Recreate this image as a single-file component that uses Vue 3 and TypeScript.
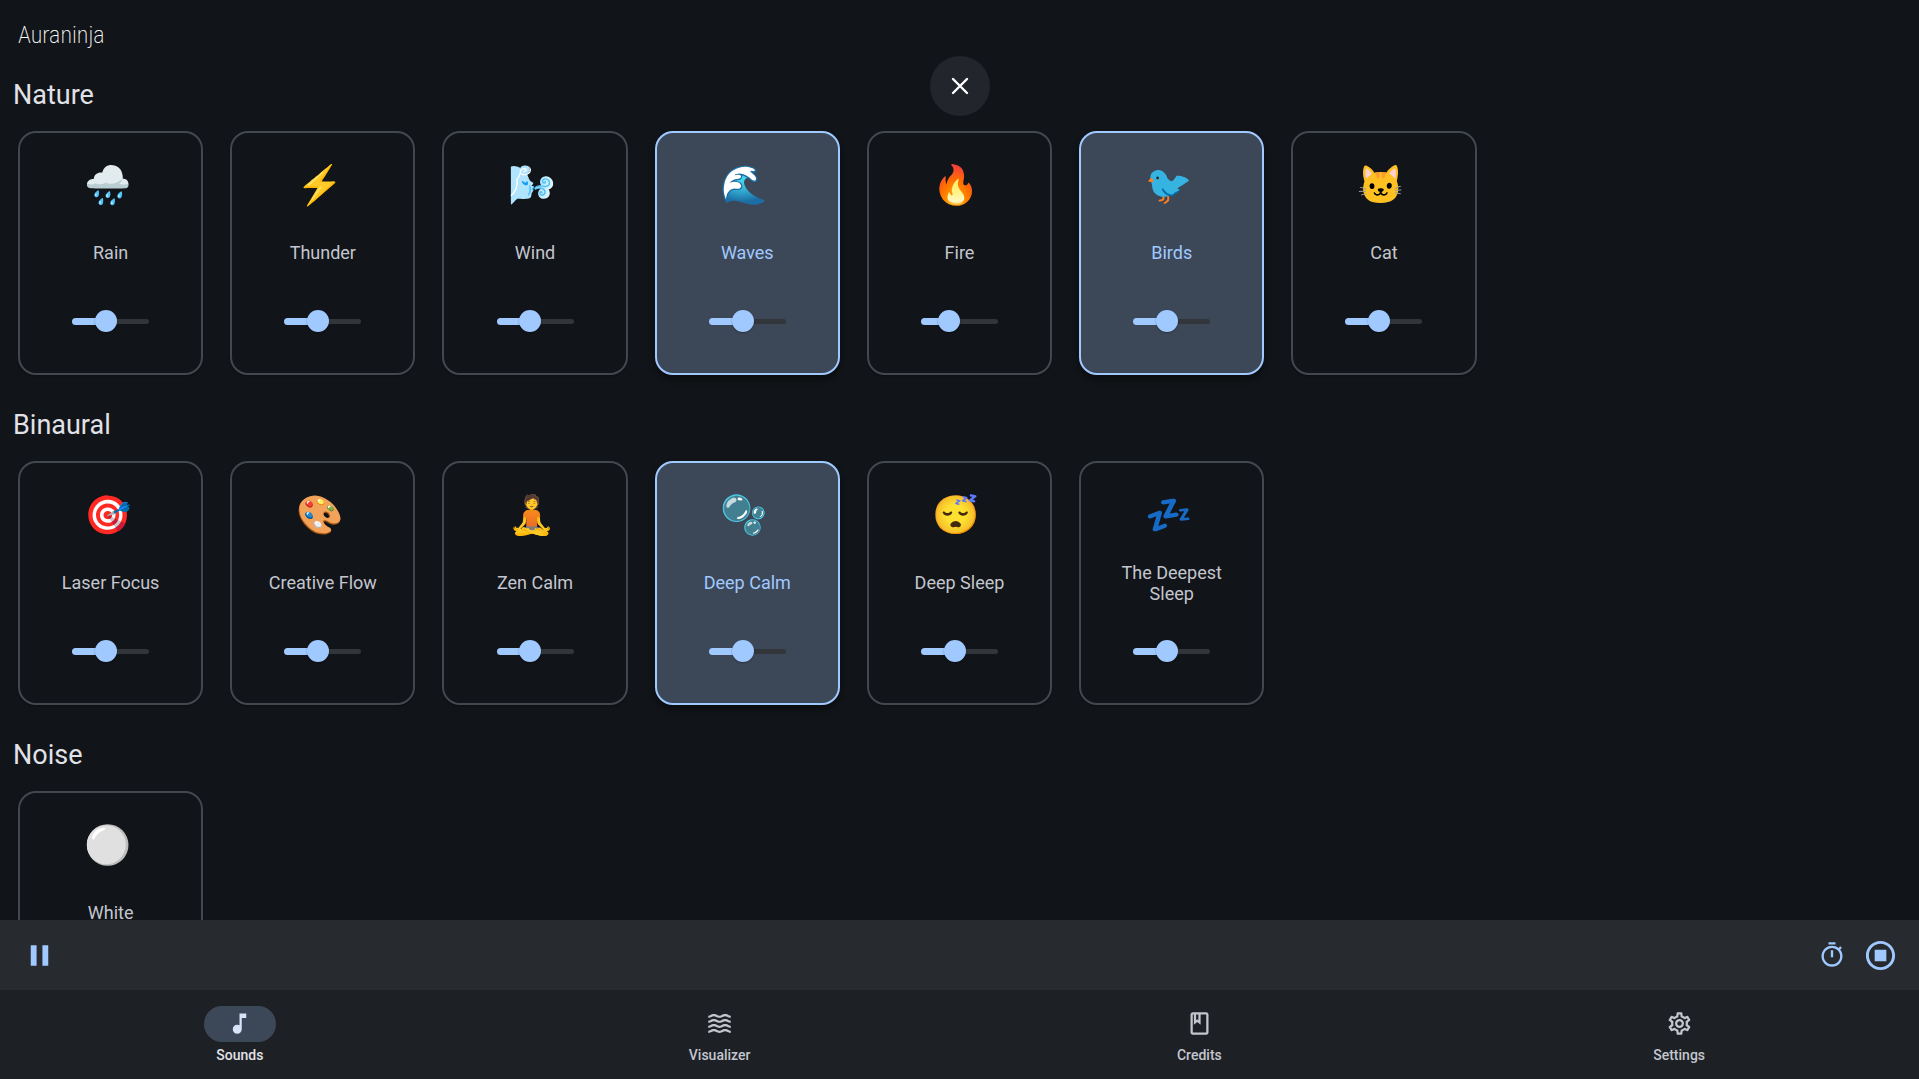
<script setup lang="ts">
import { reactive, ref } from 'vue'

interface Sound {
  name: string
  emoji: string
  volume: number
  active: boolean
}
interface Category {
  title: string
  sounds: Sound[]
}

const sound = (name: string, emoji: string, volume = 44, active = false): Sound => ({ name, emoji, volume, active })

const categories = reactive<Category[]>([
  {
    title: 'Nature',
    sounds: [
      sound('Rain', '🌧️'),
      sound('Thunder', '⚡'),
      sound('Wind', '🌬️'),
      sound('Waves', '🌊', 44, true),
      sound('Fire', '🔥', 36),
      sound('Birds', '🐦', 44, true),
      sound('Cat', '🐱'),
    ],
  },
  {
    title: 'Binaural',
    sounds: [
      sound('Laser Focus', '🎯'),
      sound('Creative Flow', '🎨'),
      sound('Zen Calm', '🧘'),
      sound('Deep Calm', '🫧', 44, true),
      sound('Deep Sleep', '😴'),
      sound('The Deepest Sleep', '💤'),
    ],
  },
  { title: 'Noise', sounds: [sound('White', '⚪')] },
])

const wave = (y: number) =>
  `M17 ${y}c-1.35 0-2.2.42-2.95.8-.65.33-1.18.6-2.05.6-.9 0-1.4-.25-2.05-.6-.75-.38-1.57-.8-2.95-.8s-2.2.42-2.95.8c-.65.33-1.17.6-2.05.6v1.95c1.35 0 2.2-.42 2.95-.8.65-.33 1.17-.6 2.05-.6s1.4.25 2.05.6c.75.38 1.57.8 2.95.8s2.2-.42 2.95-.8c.65-.33 1.18-.6 2.05-.6.9 0 1.4.25 2.05.6.75.38 1.58.8 2.95.8v-1.95c-.9 0-1.4-.25-2.05-.6-.75-.38-1.6-.8-2.95-.8z`

const tabs = [
  {
    name: 'Sounds',
    path: 'M12 3v10.55c-.59-.34-1.27-.55-2-.55-2.21 0-4 1.79-4 4s1.79 4 4 4 4-1.79 4-4V7h4V3h-6z',
  },
  { name: 'Visualizer', path: [16.99, 12.54, 8.09, 3.64].map(wave).join('') },
  {
    name: 'Credits',
    path: 'M18 2H6c-1.1 0-2 .9-2 2v16c0 1.1.9 2 2 2h12c1.1 0 2-.9 2-2V4c0-1.1-.9-2-2-2zM9 4h2v5l-1-.75L9 9V4zm9 16H6V4h1v9l3-2.25L13 13V4h5v16z',
  },
  {
    name: 'Settings',
    path: 'M19.43 12.98c.04-.32.07-.64.07-.98 0-.34-.03-.66-.07-.98l2.11-1.65c.19-.15.24-.42.12-.64l-2-3.46c-.09-.16-.26-.25-.44-.25-.06 0-.12.01-.17.03l-2.49 1c-.52-.4-1.08-.73-1.69-.98l-.38-2.65C14.46 2.18 14.25 2 14 2h-4c-.25 0-.46.18-.49.42l-.38 2.65c-.61.25-1.17.59-1.69.98l-2.49-1c-.06-.02-.12-.03-.18-.03-.17 0-.34.09-.43.25l-2 3.46c-.13.22-.07.49.12.64l2.11 1.65c-.04.32-.07.65-.07.98 0 .33.03.66.07.98l-2.11 1.65c-.19.15-.24.42-.12.64l2 3.46c.09.16.26.25.44.25.06 0 .12-.01.17-.03l2.49-1c.52.4 1.08.73 1.69.98l.38 2.65c.03.24.24.42.49.42h4c.25 0 .46-.18.49-.42l.38-2.65c.61-.25 1.17-.59 1.69-.98l2.49 1c.06.02.12.03.18.03.17 0 .34-.09.43-.25l2-3.46c.12-.22.07-.49-.12-.64l-2.11-1.65zm-1.98-1.71c.04.31.05.52.05.73 0 .21-.02.43-.05.73l-.14 1.13.89.7 1.08.84-.7 1.21-1.27-.51-1.04-.42-.9.68c-.43.32-.84.56-1.25.73l-1.06.43-.16 1.13-.2 1.35h-1.4l-.19-1.35-.16-1.13-1.06-.43c-.43-.18-.83-.41-1.23-.71l-.91-.7-1.06.43-1.27.51-.7-1.21 1.08-.84.89-.7-.14-1.13c-.03-.31-.05-.54-.05-.74s.02-.43.05-.73l.14-1.13-.89-.7-1.08-.84.7-1.21 1.27.51 1.04.42.9-.68c.43-.32.84-.56 1.25-.73l1.06-.43.16-1.13.2-1.35h1.39l.19 1.35.16 1.13 1.06.43c.43.18.83.41 1.23.71l.91.7 1.06-.43 1.27-.51.7 1.21-1.07.85-.89.7.14 1.13zM12 8c-2.21 0-4 1.79-4 4s1.79 4 4 4 4-1.79 4-4-1.79-4-4-4zm0 6c-1.1 0-2-.9-2-2s.9-2 2-2 2 .9 2 2-.9 2-2 2z',
  },
]
const currentTab = ref('Sounds')
</script>

<template>
  <div class="app">
    <main class="content">
      <header class="brand">Auraninja</header>
      <section v-for="category in categories" :key="category.title" class="category">
        <h2>{{ category.title }}</h2>
        <div class="cards">
          <article v-for="s in category.sounds" :key="s.name" class="card" :class="{ active: s.active }">
            <button class="toggle" type="button" :aria-pressed="s.active" @click="s.active = !s.active">
              <span class="emoji" aria-hidden="true">{{ s.emoji }}</span>
              <span class="name">{{ s.name }}</span>
            </button>
            <div class="slider" :style="{ '--level': s.volume / 100 }">
              <input v-model.number="s.volume" type="range" min="0" max="100" :aria-label="s.name + ' volume'" />
            </div>
          </article>
        </div>
      </section>
    </main>

    <button class="close" type="button" aria-label="Close">
      <svg width="18" height="18" viewBox="0 0 18 18"><path d="M2 2l14 14M16 2L2 16" /></svg>
    </button>

    <div class="player">
      <button type="button" aria-label="Pause">
        <svg width="35" height="35" viewBox="0 0 24 24"><path d="M6 19h4V5H6v14zm8-14v14h4V5h-4z" /></svg>
      </button>
      <div class="actions">
        <button type="button" aria-label="Timer">
          <svg width="28" height="28" viewBox="0 0 24 24"><path d="M15 1H9v2h6V1zm-4 13h2V8h-2v6zm8.03-6.61l1.42-1.42c-.43-.51-.9-.99-1.41-1.41l-1.42 1.42C16.07 4.74 14.12 4 12 4c-4.97 0-9 4.03-9 9s4.02 9 9 9 9-4.03 9-9c0-2.12-.74-4.07-1.97-5.61zM12 20c-3.87 0-7-3.13-7-7s3.13-7 7-7 7 3.13 7 7-3.13 7-7 7z" /></svg>
        </button>
        <button type="button" aria-label="Stop">
          <svg width="35" height="35" viewBox="0 0 24 24"><path d="M12 2C6.48 2 2 6.48 2 12s4.48 10 10 10 10-4.48 10-10S17.52 2 12 2zm0 18c-4.42 0-8-3.58-8-8s3.58-8 8-8 8 3.58 8 8-3.58 8-8 8zm4-4H8V8h8v8z" /></svg>
        </button>
      </div>
    </div>

    <nav class="tabs">
      <button
        v-for="tab in tabs"
        :key="tab.name"
        type="button"
        :class="{ current: tab.name === currentTab }"
        @click="currentTab = tab.name"
      >
        <span class="pill"><svg width="27" height="27" viewBox="0 0 24 24"><path :d="tab.path" /></svg></span>
        {{ tab.name }}
      </button>
    </nav>
  </div>
</template>

<style>
body {
  margin: 0;
  background: #111418;
}
</style>

<style scoped>
.app {
  position: relative;
  display: flex;
  flex-direction: column;
  height: 100vh;
  background: #111418;
  color: #e1e2e8;
  font-family: Roboto, 'Liberation Sans', sans-serif;
}
button {
  border: 0;
  padding: 0;
  background: none;
  color: inherit;
  font: inherit;
  cursor: pointer;
}
svg {
  display: block;
  fill: currentColor;
}
.content {
  flex: 1;
  min-height: 0;
  overflow-y: auto;
  scrollbar-width: none;
}
.brand {
  height: 77px;
  box-sizing: border-box;
  padding: 15px 18px 0;
  color: #fff;
  font-family: 'Roboto Condensed', Lato, sans-serif;
  font-size: 24px;
  font-weight: 200;
  line-height: 40px;
}
.category {
  padding-bottom: 32px;
}
h2 {
  margin: 0 0 18px 13px;
  font-size: 27px;
  font-weight: 400;
  line-height: 36px;
}
.cards {
  display: grid;
  grid-template-columns: repeat(auto-fill, minmax(185px, 1fr));
  gap: 27px;
  padding: 0 18px;
}
.card {
  box-sizing: border-box;
  display: flex;
  flex-direction: column;
  align-items: center;
  height: 244px;
  padding: 31px 24px 0;
  border: 2px solid #43474e;
  border-radius: 18px;
  color: #c3c6cf;
  box-shadow: 0 1px 2px rgba(0, 0, 0, 0.3);
}
.card.active {
  border-color: #a0c9ff;
  background: #3c4858;
  color: #a0c9ff;
  box-shadow: 0 4px 6px rgba(0, 0, 0, 0.4);
}
.toggle {
  display: flex;
  flex-direction: column;
  align-items: center;
  width: 100%;
}
.emoji {
  height: 42px;
  padding-right: 7px;
  font-size: 38px;
  line-height: 42px;
}
.name {
  display: flex;
  align-items: center;
  height: 93px;
  font-size: 18px;
  line-height: 21px;
  text-align: center;
}
.slider {
  display: grid;
  align-items: center;
  width: 99px;
  height: 44px;
}
.slider::before,
.slider::after,
.slider input {
  grid-area: 1 / 1;
}
.slider::before {
  content: '';
  height: 5px;
  margin: 0 11px;
  border-radius: 3px;
  background: #323539;
}
.slider::after {
  content: '';
  width: calc(77px * var(--level));
  height: 7px;
  margin-left: 11px;
  border-radius: 4px;
  background: #a0c9ff;
}
.slider input {
  z-index: 1;
  appearance: none;
  width: 100%;
  height: 22px;
  margin: 0;
  background: none;
}
.slider input::-webkit-slider-thumb {
  appearance: none;
  width: 22px;
  height: 22px;
  border-radius: 50%;
  background: #a0c9ff;
  box-shadow: 0 1px 2px rgba(0, 0, 0, 0.3);
}
.close {
  position: absolute;
  top: 56px;
  left: 50%;
  display: grid;
  place-items: center;
  width: 60px;
  height: 60px;
  margin-left: -30px;
  border-radius: 50%;
  background: #22252c;
  color: #fff;
}
.close path {
  fill: none;
  stroke: currentColor;
  stroke-width: 2.4;
  stroke-linecap: round;
}
.player {
  box-sizing: border-box;
  display: flex;
  align-items: center;
  justify-content: space-between;
  height: 70px;
  padding: 0 21px 0 22px;
  background: #272a2f;
  color: #a0c9ff;
}
.actions {
  display: flex;
  align-items: center;
  gap: 17px;
}
.tabs {
  display: flex;
  height: 89px;
  background: #1d2024;
  color: #c3c6cf;
}
.tabs button {
  flex: 1;
  display: flex;
  flex-direction: column;
  align-items: center;
  justify-content: flex-start;
  gap: 4px;
  padding-top: 16px;
  font-size: 14px;
  font-weight: 500;
  line-height: 18px;
}
.pill {
  box-sizing: border-box;
  display: grid;
  place-items: center;
  width: 72px;
  height: 36px;
  padding-bottom: 1px;
  border-radius: 18px;
}
.current {
  color: #e1e2e8;
}
.current .pill {
  background: #3c4858;
  color: #d7e3f8;
}
</style>
